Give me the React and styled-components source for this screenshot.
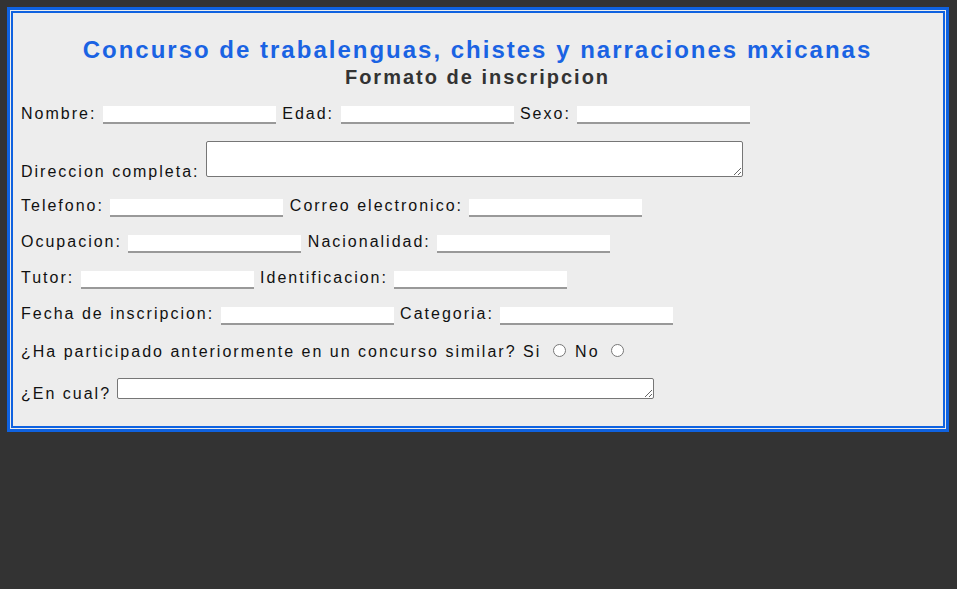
import React from "react";
import styled, { createGlobalStyle } from "styled-components";

const Global = createGlobalStyle`
  html, body { background: #333333; }
  body { margin: 7px 8px 0 7px; }
`;

const Frame = styled.form`
  display: block;
  background: #ededed;
  border: 3px solid #0f62e0;
  box-shadow: inset 0 0 0 1px #ededed, inset 0 0 0 3px #0f62e0;
  padding: 7px 12px 10px 11px;
  font-family: "Liberation Sans", Arial, sans-serif;
  font-size: 16px;
  letter-spacing: 2px;
  color: #111;
`;

const Title = styled.h2`
  margin: 19px 0 0;
  font-size: 24px;
  font-weight: bold;
  line-height: normal;
  text-align: center;
  color: #1a63e3;
`;

const Subtitle = styled.h3`
  margin: 2px 0 -1px;
  font-size: 20px;
  font-weight: bold;
  line-height: normal;
  text-align: center;
  color: #333;
`;

const Row = styled.p`
  margin: 16.5px 0;
  line-height: normal;
`;

const Field = styled.input`
  box-sizing: border-box;
  width: 173px;
  height: 18px;
  padding: 1px 2px;
  border: 0;
  border-bottom: 2px solid #999;
  border-radius: 0;
  background: #fff;
  font-family: "Liberation Sans", Arial, sans-serif;
  font-size: 13.33px;
  letter-spacing: 0;
  vertical-align: baseline;
  outline: none;
`;

const Area = styled.textarea`
  box-sizing: border-box;
  width: 537px;
  height: ${(p) => p.$h}px;
  padding: 2px;
  margin: 0;
  border: 1px solid #767676;
  border-radius: 2px;
  background: #fff;
  font-family: "Liberation Mono", monospace;
  font-size: 13.33px;
  letter-spacing: 0;
  vertical-align: baseline;
`;

const Radio = styled.input`
  width: 13px;
  height: 13px;
  margin: 3px 3px 0 5px;
  vertical-align: baseline;
`;

export default function App() {
  return (
    <>
      <Global />
      <Frame onSubmit={(e) => e.preventDefault()}>
        <Title>Concurso de trabalenguas, chistes y narraciones mxicanas</Title>
        <Subtitle>Formato de inscripcion</Subtitle>
        <Row>
          Nombre: <Field type="text" /> Edad: <Field type="text" /> Sexo: <Field type="text" />
        </Row>
        <Row>
          Direccion completa: <Area $h={36} />
        </Row>
        <Row>
          Telefono: <Field type="text" /> Correo electronico: <Field type="text" />
        </Row>
        <Row>
          Ocupacion: <Field type="text" /> Nacionalidad: <Field type="text" />
        </Row>
        <Row>
          Tutor: <Field type="text" /> Identificacion: <Field type="text" />
        </Row>
        <Row>
          Fecha de inscripcion: <Field type="text" /> Categoria: <Field type="text" />
        </Row>
        <Row>
          ¿Ha participado anteriormente en un concurso similar? Si <Radio type="radio" name="prev" /> No <Radio type="radio" name="prev" />
        </Row>
        <Row>
          ¿En cual? <Area $h={21} />
        </Row>
      </Frame>
    </>
  );
}
